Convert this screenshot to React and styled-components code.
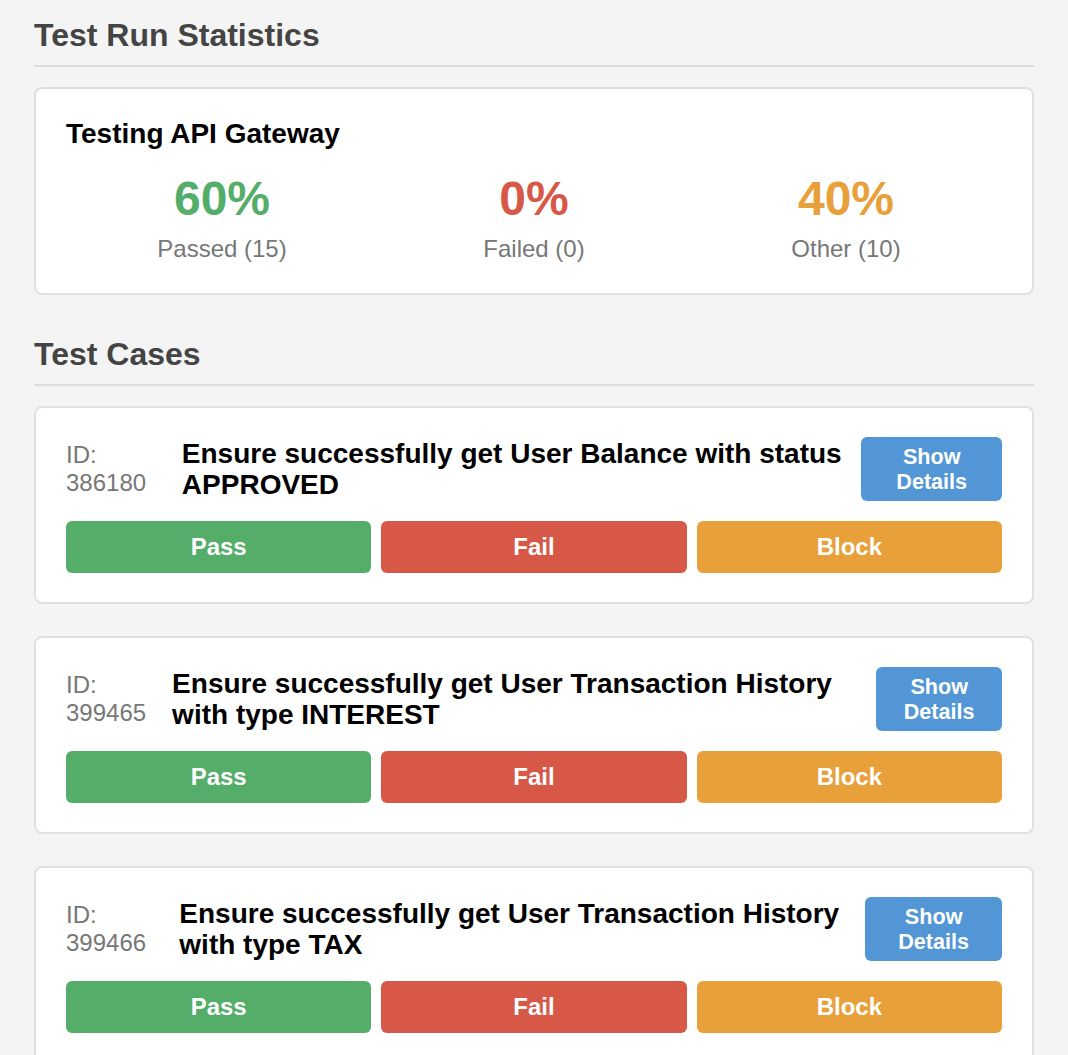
import styled, { createGlobalStyle } from 'styled-components';

const stats = [
	{ value: '60%', label: 'Passed (15)', tone: 'pass' },
	{ value: '0%', label: 'Failed (0)', tone: 'fail' },
	{ value: '40%', label: 'Other (10)', tone: 'block' },
];

const cases = [
	{ id: 386180, title: 'Ensure successfully get User Balance with status APPROVED' },
	{ id: 399465, title: 'Ensure successfully get User Transaction History with type INTEREST' },
	{ id: 399466, title: 'Ensure successfully get User Transaction History with type TAX' },
];

const tones = {
	pass: '#55ad6a',
	fail: '#d85848',
	block: '#e8a03b',
};

export default function App () {
	return (
		<>
			<GlobalStyle />
			<Page>
				<Section>
					<SectionTitle>Test Run Statistics</SectionTitle>
					<Card>
						<CardTitle>Testing API Gateway</CardTitle>
						<StatsGrid>
							{stats.map(s => (
								<Stat key={s.label}>
									<StatValue $tone={s.tone}>{s.value}</StatValue>
									<StatLabel>{s.label}</StatLabel>
								</Stat>
							))}
						</StatsGrid>
					</Card>
				</Section>
				<Section>
					<SectionTitle>Test Cases</SectionTitle>
					{cases.map(c => (
						<CaseCard key={c.id}>
							<CaseHeader>
								<CaseId>ID: {c.id}</CaseId>
								<CaseTitle>{c.title}</CaseTitle>
								<DetailsButton>Show Details</DetailsButton>
							</CaseHeader>
							<Actions>
								<ActionButton $tone="pass">Pass</ActionButton>
								<ActionButton $tone="fail">Fail</ActionButton>
								<ActionButton $tone="block">Block</ActionButton>
							</Actions>
						</CaseCard>
					))}
				</Section>
			</Page>
		</>
	);
}

const GlobalStyle = createGlobalStyle`
	body {
		margin: 0;
		background: #f4f4f4;
		font-family: 'Liberation Sans', Arial, sans-serif;
	}
`;

const Page = styled.div`
	max-width: 1000px;
	margin: 0 auto;
	padding-top: 17px;
`;

const Section = styled.section`
	& + & {
		margin-top: 41px;
	}
`;

const SectionTitle = styled.h2`
	margin: 0 0 20px;
	padding-bottom: 11px;
	border-bottom: 2px solid #dddddd;
	font-size: 32px;
	font-weight: bold;
	color: #444;
`;

const Card = styled.div`
	background: #fff;
	border: 2px solid #e0e0e0;
	border-radius: 8px;
	padding: 29px 30px 30px;
`;

const CardTitle = styled.h3`
	margin: 0 0 21px;
	font-size: 28px;
	font-weight: bold;
	color: #000;
`;

const StatsGrid = styled.div`
	display: grid;
	grid-template-columns: repeat(3, 1fr);
	text-align: center;
`;

const Stat = styled.div`
	display: flex;
	flex-direction: column;
	align-items: center;
`;

const StatValue = styled.div`
	font-size: 48px;
	font-weight: bold;
	color: ${p => tones[p.$tone]};
`;

const StatLabel = styled.div`
	margin-top: 9px;
	font-size: 24px;
	color: #777;
`;

const CaseCard = styled(Card)`
	padding: 29px 30px;
	margin-bottom: 32px;
`;

const CaseHeader = styled.div`
	display: flex;
	align-items: center;
	gap: 16px;
	margin-bottom: 20px;
`;

const CaseId = styled.div`
	flex: 0 1.1 127px;
	font-size: 24px;
	line-height: 28px;
	color: #777;
`;

const CaseTitle = styled.div`
	flex: 0 1 auto;
	font-size: 28px;
	line-height: 31px;
	font-weight: bold;
	color: #000;
`;

const DetailsButton = styled.button`
	flex: 0 1.6 auto;
	padding: 7px 24px;
	border: none;
	border-radius: 6px;
	background: #5296d5;
	color: #fff;
	font-family: inherit;
	font-size: 21.6px;
	line-height: 25px;
	font-weight: bold;
	cursor: pointer;
`;

const Actions = styled.div`
	display: grid;
	grid-template-columns: repeat(3, 1fr);
	gap: 10px;
`;

const ActionButton = styled.button`
	height: 52px;
	border: none;
	border-radius: 6px;
	background: ${p => tones[p.$tone]};
	color: #fff;
	font-family: inherit;
	font-size: 24px;
	font-weight: bold;
	cursor: pointer;
`;
